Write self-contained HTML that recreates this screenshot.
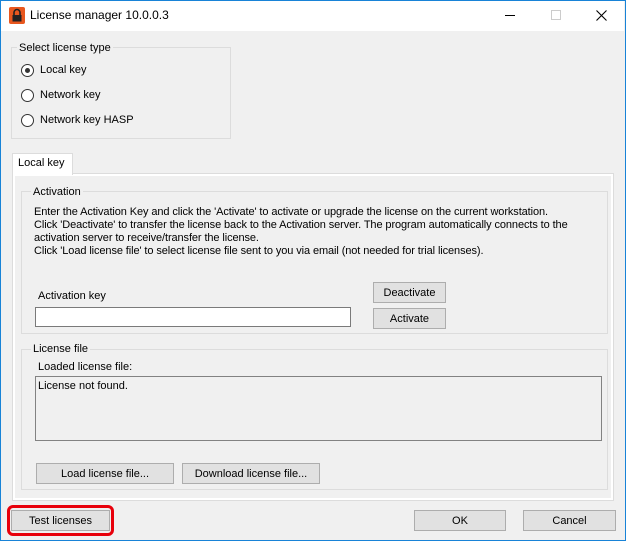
<!DOCTYPE html>
<html><head><style>
*{margin:0;padding:0;box-sizing:border-box}
body{width:626px;height:541px;overflow:hidden;background:#fff;font-family:"Liberation Sans",sans-serif;font-size:11px;color:#000;position:relative}
.a{position:absolute}
.win{left:0;top:0;width:626px;height:541px;border:1px solid #1883d7;background:#f0f0f0}
.title{left:1px;top:1px;width:623px;height:30px;background:#fff}
.grp{border:1px solid #dcdcdc}
.lbl{background:#f0f0f0;padding:0 2px;white-space:nowrap}
.btn{border:1px solid #adadad;background:#e1e1e1;text-align:center;line-height:20px;white-space:nowrap}
.radio{width:13px;height:13px;border:1px solid #333;border-radius:50%;background:#fff}
.t{white-space:nowrap}
</style></head><body>
<div class="a win"></div>
<div class="a title"></div>
<svg class="a" style="left:9px;top:7px" width="16" height="17" viewBox="0 0 16 17"><rect x="0" y="0" width="16" height="17" rx="2" fill="#e8571e"/><path d="M5 8V5.5a3 3 0 0 1 6 0V8" stroke="#222" stroke-width="1.6" fill="none"/><rect x="3.5" y="8" width="9" height="6.5" fill="#222"/></svg>
<div class="a t" style="left:30px;top:8px;font-size:12px">License manager 10.0.0.3</div>
<div class="a" style="left:505px;top:15px;width:10px;height:1px;background:#000"></div>
<div class="a" style="left:551px;top:10px;width:10px;height:10px;border:1px solid #ccc"></div>
<svg class="a" style="left:596px;top:10px" width="11" height="11"><path d="M0.5 0.5L10.5 10.5M10.5 0.5L0.5 10.5" stroke="#000" stroke-width="1.1"/></svg>

<div class="a grp" style="left:11px;top:47px;width:220px;height:92px"></div>
<div class="a lbl" style="left:17px;top:42px">Select license type</div>
<div class="a radio" style="left:21px;top:64px"></div><div class="a" style="left:25px;top:68px;width:5px;height:5px;border-radius:50%;background:#333"></div>
<div class="a t" style="left:40px;top:64px">Local key</div>
<div class="a radio" style="left:21px;top:89px"></div><div class="a t" style="left:40px;top:89px">Network key</div>
<div class="a radio" style="left:21px;top:114px"></div><div class="a t" style="left:40px;top:114px">Network key HASP</div>

<div class="a" style="left:12px;top:173px;width:602px;height:328px;border:1px solid #dcdcdc;background:#fff"></div>
<div class="a" style="left:15px;top:176px;width:596px;height:322px;background:#f0f0f0"></div>
<div class="a" style="left:12px;top:153px;width:61px;height:22px;border:1px solid #dcdcdc;border-bottom:none;background:#fff"></div>
<div class="a t" style="left:18px;top:157px">Local key</div>

<div class="a grp" style="left:21px;top:191px;width:587px;height:143px"></div>
<div class="a lbl" style="left:31px;top:186px">Activation</div>
<div class="a t" style="left:34px;top:206px;line-height:13px;letter-spacing:-0.1px">Enter the Activation Key and click the 'Activate' to activate or upgrade the license on the current workstation.<br>Click 'Deactivate' to transfer the license back to the Activation server. The program automatically connects to the<br>activation server to receive/transfer the license.<br>Click 'Load license file' to select license file sent to you via email (not needed for trial licenses).</div>
<div class="a t" style="left:38px;top:290px">Activation key</div>
<div class="a" style="left:35px;top:307px;width:316px;height:20px;border:1px solid #7a7a7a;background:#fff"></div>
<div class="a btn" style="left:373px;top:282px;width:73px;height:21px">Deactivate</div>
<div class="a btn" style="left:373px;top:308px;width:73px;height:21px">Activate</div>

<div class="a grp" style="left:21px;top:349px;width:587px;height:141px"></div>
<div class="a lbl" style="left:31px;top:343px">License file</div>
<div class="a t" style="left:38px;top:361px">Loaded license file:</div>
<div class="a" style="left:35px;top:376px;width:567px;height:65px;border:1px solid #828282;background:#f0f0f0"></div>
<div class="a t" style="left:38px;top:380px">License not found.</div>
<div class="a btn" style="left:36px;top:463px;width:138px;height:21px">Load license file...</div>
<div class="a btn" style="left:182px;top:463px;width:138px;height:21px">Download license file...</div>

<div class="a" style="left:7px;top:505px;width:107px;height:31px;border:3px solid #e8000b;border-radius:6px"></div>
<div class="a btn" style="left:11px;top:510px;width:99px;height:21px">Test licenses</div>
<div class="a btn" style="left:414px;top:510px;width:92px;height:21px">OK</div>
<div class="a btn" style="left:523px;top:510px;width:93px;height:21px">Cancel</div>
</body></html>
